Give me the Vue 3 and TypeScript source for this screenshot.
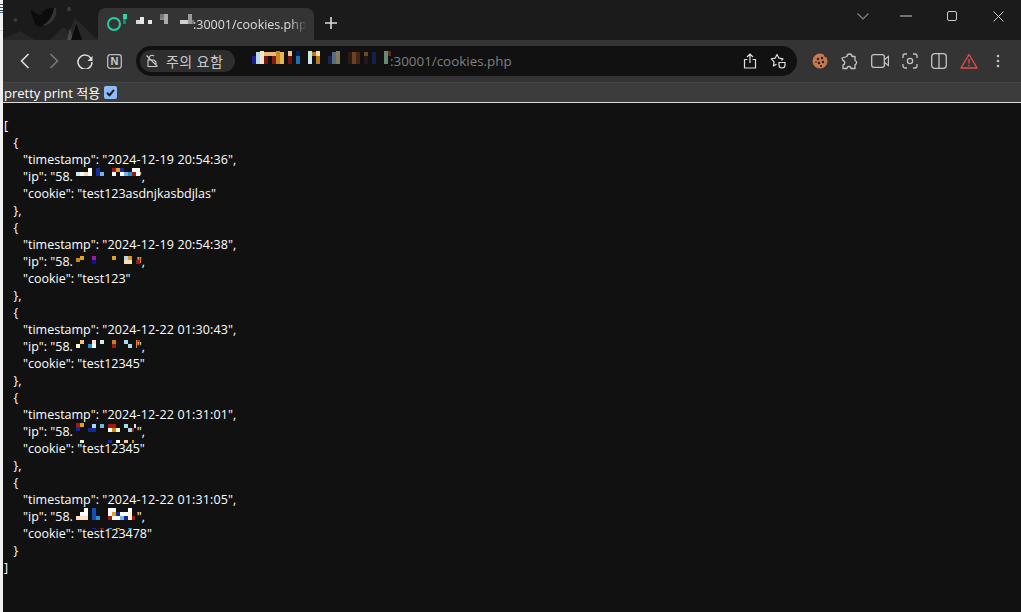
<script setup lang="ts">
interface Entry { ts: string; ip: string; cookie: string; last: boolean }
type Cell = [number, number, number, number, string];

const entries: Entry[] = [
  { ts: '2024-12-19 20:54:36', ip: '58.', cookie: 'test123asdnjkasbdjlas', last: false },
  { ts: '2024-12-19 20:54:38', ip: '58.', cookie: 'test123', last: false },
  { ts: '2024-12-22 01:30:43', ip: '58.', cookie: 'test12345', last: false },
  { ts: '2024-12-22 01:31:01', ip: '58.', cookie: 'test12345', last: false },
  { ts: '2024-12-22 01:31:05', ip: '58.', cookie: 'test123478', last: true },
];

const mosaic: Cell[] = [
  [0, 4, 3, 1, '#444'], [0, 7, 3, 1, '#444'], [0, 10, 3, 1, '#333'], [0, 12, 3, 1, '#2a5aa0'], [0, 30, 3, 1, '#d4d4d4'],

  [136, 20, 4, 4, '#d8d8d8'], [140, 17, 4, 7, '#e6e6e6'], [148, 20, 4, 4, '#e8e8e8'],
  [160, 14, 4, 4, '#777'], [164, 14, 4, 10, '#aaa'], [160, 18, 4, 2, '#888'],
  [180, 20, 8, 4, '#d0d0d0'], [188, 14, 4, 10, '#999'], [192, 20, 2, 4, '#777'],
  [123, 14, 4, 5, '#2bd6a6'], [123, 19, 3, 5, '#1a8a70'],

  [252, 56, 4, 8, '#1a1a9a'], [256, 52, 4, 12, '#b8d8ee'], [260, 51, 4, 13, '#f4e6c8'], [264, 52, 12, 4, '#e8b878'],
  [264, 56, 4, 8, '#7a1414'], [272, 56, 4, 8, '#8a1818'], [276, 51, 4, 13, '#c98a1c'], [280, 52, 4, 12, '#e8b060'],
  [288, 51, 4, 5, '#f1c48a'], [288, 56, 4, 8, '#741212'], [296, 51, 4, 5, '#101868'], [296, 56, 4, 8, '#1e6fb8'],
  [308, 51, 4, 13, '#cbe9e0'], [312, 52, 4, 4, '#c07a18'], [316, 51, 4, 5, '#f5dfa8'], [316, 56, 4, 8, '#c07a18'],
  [328, 56, 4, 8, '#1b2350'], [332, 52, 4, 12, '#5a6c80'], [336, 51, 4, 13, '#857a60'],
  [348, 52, 4, 12, '#2e1a12'], [352, 52, 4, 12, '#6a4420'], [356, 52, 4, 12, '#4a2414'],
  [364, 52, 4, 4, '#6a4c20'], [364, 56, 4, 8, '#2a1614'], [372, 52, 4, 12, '#16204a'],
  [384, 51, 4, 13, '#648a74'], [388, 51, 3, 5, '#6a2a18'],

  [76, 172, 4, 4, '#cfe8f8'], [80, 172, 4, 4, '#fff'], [84, 172, 4, 4, '#ffdcb8'], [88, 168, 4, 8, '#fff'],
  [96, 168, 4, 8, '#1428a8'], [100, 172, 4, 4, '#72b4ec'],
  [112, 168, 4, 4, '#a01818'], [116, 168, 4, 4, '#e0a020'], [120, 168, 4, 4, '#1428a0'],
  [112, 172, 4, 4, '#fff'], [120, 172, 4, 4, '#fff'], [124, 172, 4, 4, '#72b4ec'], [128, 172, 4, 4, '#2a90d0'],
  [132, 168, 4, 4, '#fff'], [132, 172, 4, 4, '#a01818'], [136, 168, 4, 8, '#fff'],

  [76, 258, 4, 4, '#c8881c'], [80, 256, 4, 4, '#e0a020'], [92, 256, 4, 4, '#a018a0'], [92, 260, 4, 4, '#1410a0'], [112, 256, 4, 4, '#e0a020'],
  [124, 256, 4, 4, '#b8d8e8'], [128, 256, 4, 4, '#d89838'], [124, 260, 8, 4, '#f4e2a8'], [136, 260, 4, 4, '#a01818'], [140, 257, 1, 6, '#e09030'],

  [76, 344, 4, 4, '#fff8d0'], [80, 340, 4, 4, '#f4c088'], [88, 344, 4, 4, '#2090e0'], [92, 340, 4, 4, '#ffdcd0'], [92, 344, 4, 4, '#fff'], [100, 340, 4, 4, '#d0f4d8'],
  [112, 340, 4, 4, '#c8801c'], [112, 344, 4, 4, '#a01818'], [124, 340, 4, 4, '#a8d8f0'], [128, 344, 4, 4, '#a8d8f0'], [136, 340, 1, 8, '#e08030'], [137, 340, 3, 2, '#b03020'],

  [76, 423, 4, 4, '#a01818'], [80, 423, 4, 4, '#e0a020'], [76, 427, 4, 4, '#1428a0'], [88, 428, 8, 4, '#1428a0'], [92, 424, 4, 4, '#a8d8f0'], [100, 424, 4, 4, '#72b4ec'],
  [108, 424, 8, 4, '#a01818'], [108, 428, 4, 4, '#fff'], [112, 428, 4, 4, '#d08818'], [116, 428, 4, 4, '#fff8d0'], [124, 424, 4, 4, '#a8d8f0'], [128, 428, 4, 4, '#a8d8f0'],
  [132, 428, 2, 4, '#a01818'], [134, 424, 2, 4, '#ddd'],
  [80, 440, 4, 3, '#f0e8c8'], [108, 440, 4, 3, '#1428a0'], [116, 440, 4, 3, '#fff'], [124, 440, 4, 3, '#f0c8a0'], [132, 440, 2, 3, '#d09820'],

  [84, 508, 4, 4, '#fff'], [80, 512, 8, 4, '#fff'], [76, 516, 12, 4, '#ffe0c4'],
  [92, 508, 4, 12, '#1450b8'], [96, 516, 4, 4, '#2a90d8'],
  [108, 508, 8, 4, '#fff'], [128, 508, 4, 4, '#fff'],
  [108, 512, 4, 4, '#fff'], [112, 512, 4, 4, '#e0a020'], [116, 512, 4, 4, '#1428a0'], [120, 512, 8, 4, '#fff'], [128, 512, 4, 4, '#fff3d8'],
  [108, 516, 4, 4, '#a01818'], [112, 516, 8, 4, '#fff'], [120, 516, 4, 4, '#72b4ec'], [124, 516, 4, 4, '#1428a0'], [128, 516, 4, 4, '#fff3d8'], [132, 516, 3, 4, '#a01818'],
  [92, 528, 4, 1, '#1428a0'], [100, 528, 4, 1, '#a01818'], [108, 528, 4, 1, '#2a90d8'], [116, 528, 4, 1, '#e0a020'], [128, 528, 4, 1, '#2a90d8'],
];

function cellStyle(c: Cell) {
  return { left: c[0] + 'px', top: c[1] + 'px', width: c[2] + 'px', height: c[3] + 'px', background: c[4] };
}
</script>

<template>
  <div class="screen">
    <div class="edge"></div>
    <div class="window">
      <header class="tabstrip">
        <div class="theme">
          <svg width="95" height="40" viewBox="0 0 95 40">
            <path d="M-3 40 L17 31 L32 40 Z" fill="#262626" />
            <path d="M47 40 L60 27 L66 31 L72 18 L95 40 Z" fill="#272727" />
            <path d="M64 40 L67 28 L70 40 Z" fill="#4a4a4a" />
            <path d="M68 40 L73.500 24 L79 40 Z" fill="#0c0c0c" />
            <circle cx="12.500" cy="20" r="2" fill="#3a3a3a" />
            <circle cx="66" cy="9" r="2.200" fill="#3a3a3a" />
            <path d="M28 9 C32 13 35 15 38 15 C40 10 46 7 53 8 C53 16 46 25 37 27 C33 26 31 23 31 20 C29 16 28 13 28 9 Z" fill="#0c0c0c" />
            <path d="M39 26 C46 22 50 15 51 8 L53 8 C55 16 49 25 39 26 Z" fill="#353535" />
          </svg>
        </div>
        <div class="tab">
          <span class="tab-ring"></span>
          <span class="tab-title">:30001/cookies.php</span>
        </div>
        <svg class="newtab" width="14" height="14" viewBox="0 0 14 14"><path d="M7 1v12M1 7h12" stroke="#ddd" stroke-width="1.600" /></svg>
        <div class="spacer"></div>
        <div class="controls">
          <svg class="chev" width="12" height="7" viewBox="0 0 12 7"><path d="M.5.5l5.500 5.500L11.500.5" fill="none" stroke="#888" stroke-width="1.100" /></svg>
          <svg width="12" height="2" viewBox="0 0 12 2"><path d="M0 1h12" stroke="#ccc" /></svg>
          <svg width="10" height="10" viewBox="0 0 10 10"><rect x=".5" y=".5" width="9" height="9" rx="1.500" fill="none" stroke="#ccc" /></svg>
          <svg width="11" height="11" viewBox="0 0 11 11"><path d="M.5.5l10 10M10.500.5l-10 10" stroke="#ccc" /></svg>
        </div>
      </header>

      <nav class="toolbar">
        <div class="nav-icons">
          <svg width="10" height="16" viewBox="0 0 10 16"><path d="M8.500 1L1.500 8l7 7" fill="none" stroke="#ddd" stroke-width="1.600" /></svg>
          <svg width="10" height="16" viewBox="0 0 10 16"><path d="M1.500 1l7 7-7 7" fill="none" stroke="#777" stroke-width="1.600" /></svg>
          <svg width="16" height="16" viewBox="0 0 16 16"><path d="M14 5.500A7 7 0 1 0 15 9" fill="none" stroke="#ddd" stroke-width="1.500" /><path d="M15.500 3v5h-5z" fill="#ddd" /></svg>
          <svg width="15" height="15" viewBox="0 0 15 15"><rect x=".7" y=".7" width="13.600" height="13.600" rx="2.500" fill="none" stroke="#bbb" stroke-width="1.300" /><text x="7.500" y="11.300" class="n-logo">N</text></svg>
        </div>
        <div class="omnibox">
          <div class="chip">
            <svg width="14" height="14" viewBox="0 0 14 14"><path d="M4 5.500V4a3 3 0 0 1 5-2M3 6h6l2 2v4.500H3zM1.500 1.500l11 11" fill="none" stroke="#ccc" stroke-width="1.100" /></svg>
            <span>주의 요함</span>
          </div>
          <span class="url">:30001/cookies.php</span>
          <div class="spacer"></div>
          <svg width="14" height="16" viewBox="0 0 14 16"><path d="M7 10V1M4 4l3-3 3 3M4.500 6.500H1.500v8.500h11V6.500h-3" fill="none" stroke="#ddd" stroke-width="1.200" /></svg>
          <svg width="16" height="16" viewBox="0 0 16 16"><path d="M11.500 7.500l1.500-1.600-4-.7L7 1.500 5.200 5.200l-4 .7 2.900 3-.7 4 3.100-1.700" fill="none" stroke="#ddd" stroke-width="1.200" stroke-linejoin="round" /><path d="M9 9.500h6v2.500a3 3 0 0 1-6 0z" fill="none" stroke="#ddd" stroke-width="1.200" /></svg>
        </div>
        <div class="ext-icons">
          <svg width="16" height="16" viewBox="0 0 16 16"><circle cx="8" cy="8" r="7.500" fill="#c47a4e" /><path d="M16 3l-3 1.500L11 0z" fill="#343434" /><g fill="#2b1a12"><circle cx="6" cy="6" r="1.200" /><circle cx="10" cy="5" r="1.200" /><circle cx="11" cy="9" r="1.200" /><circle cx="7" cy="10" r="1.200" /><circle cx="4" cy="9" r=".8" /><circle cx="9" cy="13" r="1" /></g></svg>
          <svg width="17" height="17" viewBox="0 0 17 17"><path d="M6 3.500a2.500 2.500 0 0 1 5 0h3v4a2.200 2.200 0 0 1 0 4.200v3.800h-4a2 2 0 0 0-4 0H2v-3.500a2.300 2.300 0 0 0 0-4.500L1 5z" fill="none" stroke="#c4c4c4" stroke-width="1.300" stroke-linejoin="round" /></svg>
          <svg width="18" height="14" viewBox="0 0 18 14"><rect x=".7" y=".7" width="12.600" height="12.600" rx="2" fill="none" stroke="#c4c4c4" stroke-width="1.300" /><path d="M13.500 5.500l4-3v9l-4-3" fill="none" stroke="#c4c4c4" stroke-width="1.300" /></svg>
          <svg width="16" height="16" viewBox="0 0 16 16"><path d="M1 5V3a2 2 0 0 1 2-2h2M11 1h2a2 2 0 0 1 2 2v2M15 11v2a2 2 0 0 1-2 2h-2M5 15H3a2 2 0 0 1-2-2v-2" fill="none" stroke="#c4c4c4" stroke-width="1.300" /><circle cx="8" cy="8" r="2.600" fill="none" stroke="#c4c4c4" stroke-width="1.300" /></svg>
          <svg width="16" height="16" viewBox="0 0 16 16"><rect x=".7" y=".7" width="14.600" height="14.600" rx="3" fill="none" stroke="#c4c4c4" stroke-width="1.300" /><path d="M8 1v14" stroke="#c4c4c4" stroke-width="1.300" /></svg>
          <svg width="18" height="16" viewBox="0 0 18 16"><path d="M9 1.500L1 15h16z" fill="none" stroke="#e8484a" stroke-width="1.400" stroke-linejoin="round" /><path d="M9 6v4.500M9 11.800v1.400" stroke="#e8484a" stroke-width="1.400" /></svg>
          <svg class="dots" width="4" height="14" viewBox="0 0 4 14"><g fill="#c4c4c4"><circle cx="2" cy="2" r="1.300" /><circle cx="2" cy="7" r="1.300" /><circle cx="2" cy="12" r="1.300" /></g></svg>
        </div>
      </nav>

      <div class="optbar">
        <label>pretty print 적용</label>
        <span class="check">
          <svg width="13" height="13" viewBox="0 0 13 13"><path d="M3 6.800l2.500 2.500L10 3.800" fill="none" stroke="#1a1a1a" stroke-width="2" /></svg>
        </span>
      </div>

      <main class="body">
        <div class="line">[</div>
        <template v-for="e in entries" :key="e.ts">
          <div class="line in1">{</div>
          <div class="line in2">"timestamp": <span class="date">"{{ e.ts }}"</span>,</div>
          <div class="line in2"><span>"ip": "{{ e.ip }}</span><span class="ip-rest">",</span></div>
          <div class="line in2">"cookie": "{{ e.cookie }}"</div>
          <div class="line in1">{{ e.last ? '}' : '},' }}</div>
        </template>
        <div class="line">]</div>
      </main>
    </div>
    <i v-for="(c, i) in mosaic" :key="i" class="cell" :style="cellStyle(c)"></i>
  </div>
</template>

<style scoped>
.screen {
  position: relative;
  width: 1021px;
  height: 612px;
  display: flex;
  overflow: hidden;
  background: #111;
  font-family: "Open Sans", "Noto Sans CJK KR", sans-serif;
}
.edge { width: 3px; flex: none; background: #f0f0f0; }
.window { flex: 1; min-width: 0; display: flex; flex-direction: column; }
.tabstrip { height: 40px; flex: none; background: #1b1b1b; display: flex; align-items: flex-end; }
.theme { width: 95px; height: 40px; flex: none; }
.theme svg { display: block; }
.tab {
  width: 216px; height: 32px; flex: none;
  background: #343434; border-radius: 8px 8px 0 0;
  display: flex; align-items: center; position: relative;
}
.tab-ring {
  width: 14px; height: 14px; margin-left: 9px; flex: none;
  border: 2px solid #1fd0a4; border-radius: 50%; box-sizing: border-box;
}
.tab-title {
  position: absolute; left: 95px; right: 7px; top: 8px;
  font-size: 12.500px; line-height: 17px; color: #dcdcdc; white-space: nowrap; overflow: hidden;
  -webkit-mask-image: linear-gradient(to right, #000 85%, transparent 100%);
  mask-image: linear-gradient(to right, #000 85%, transparent 100%);
}
.newtab { margin: 0 0 10px 10px; flex: none; }
.spacer { flex: 1; }
.controls {
  align-self: flex-start; display: grid; grid-template-columns: repeat(4, 46px);
  justify-items: center; align-items: center; height: 32px;
}
.chev { margin-left: 6px; }
.toolbar {
  height: 43px; flex: none; box-sizing: border-box;
  background: #343434; border-bottom: 1px solid #454545;
  display: flex; align-items: center;
}
.nav-icons { display: grid; grid-template-columns: 29px 28px 30px 15px; margin-left: 17px; align-items: center; }
.nav-icons svg { display: block; }
.n-logo { font: 700 11px "Liberation Sans", sans-serif; fill: #ccc; text-anchor: middle; }
.omnibox {
  width: 661px; height: 30px; margin-left: 14px; padding: 0 11px 0 4px; box-sizing: border-box;
  background: #111; border-radius: 15px;
  display: flex; align-items: center; gap: 13px; flex: none;
}
.chip {
  height: 22px; width: 95px; box-sizing: border-box; padding-left: 5px; flex: none;
  background: #2e2e2e; border-radius: 11px; display: flex; align-items: center; gap: 7px;
  color: #c9c9c9; font-size: 14px; letter-spacing: .4px; white-space: nowrap;
}
.url { margin-left: 142px; font-size: 13.400px; color: #7f7f7f; white-space: nowrap; }
.ext-icons { display: flex; align-items: center; margin-left: 15px; gap: 13px; }
.ext-icons svg { display: block; flex: none; }
.dots { margin-left: 5px; }
.optbar {
  height: 19px; flex: none;
  background: #3c3c3c; border-bottom: 1px solid #ddd;
  display: flex; align-items: center; gap: 4px; padding-left: 1px;
  color: #fff; font-size: 13px;
}
.check {
  width: 13px; height: 13px; background: #8fbcf8; border-radius: 2px; flex: none;
  display: block;
}
.check svg { display: block; }
.body { flex: 1; padding-top: 14px; padding-left: 1px; background: #111; color: #fff; font-size: 12.500px; }
.line { height: 17px; line-height: 17px; white-space: pre; }
.in1 { padding-left: 9.500px; }
.in2 { padding-left: 19px; }
.date { letter-spacing: .14px; }
.ip-rest { margin-left: 64px; }
.cell { position: absolute; display: block; }
</style>
